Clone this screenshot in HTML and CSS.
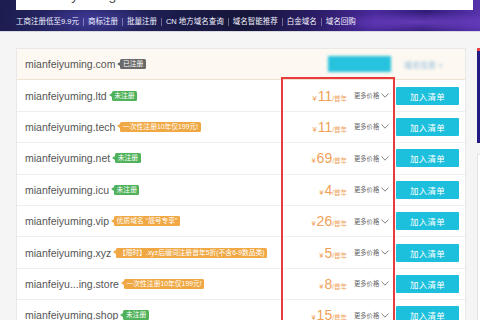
FILE: index.html
```html
<!DOCTYPE html>
<html lang="zh">
<head>
<meta charset="utf-8">
<title>域名查询</title>
<link rel="stylesheet" href="styles.css">
</head>
<body>
<header class="top">
  <div class="search">mianfeiyuming</div>
  <nav class="nav">
    <a>工商注册低至9.9元</a><i class="sep"></i>
    <a>商标注册</a><i class="sep"></i>
    <a>批量注册</a><i class="sep"></i>
    <a>CN 地方域名查询</a><i class="sep"></i>
    <a>域名智能推荐</a><i class="sep"></i>
    <a>白金域名</a><i class="sep"></i>
    <a>域名回购</a>
  </nav>
</header>
<main class="main">
  <section class="list">
    <div class="row first">
      <div class="name">mianfeiyuming.com<span class="tag grey">已注册</span></div>
      <div class="blur-btn"></div>
      <div class="blur-info">域名信息 ˅</div>
    </div>
    <div class="row">
      <div class="name">mianfeiyuming.ltd<span class="tag green">未注册</span></div>
      <div class="price"><span class="yen">¥</span><span class="num">11</span><span class="unit">/首年</span></div>
      <div class="more">更多价格<svg class="chev" viewBox="0 0 8 5"><path d="M0.5 0.5 L4 4.2 L7.5 0.5"/></svg></div>
      <button class="add">加入清单</button>
    </div>
    <div class="row">
      <div class="name">mianfeiyuming.tech<span class="tag orange">一次性注册10年仅199元!</span></div>
      <div class="price"><span class="yen">¥</span><span class="num">11</span><span class="unit">/首年</span></div>
      <div class="more">更多价格<svg class="chev" viewBox="0 0 8 5"><path d="M0.5 0.5 L4 4.2 L7.5 0.5"/></svg></div>
      <button class="add">加入清单</button>
    </div>
    <div class="row">
      <div class="name">mianfeiyuming.net<span class="tag green">未注册</span></div>
      <div class="price"><span class="yen">¥</span><span class="num">69</span><span class="unit">/首年</span></div>
      <div class="more">更多价格<svg class="chev" viewBox="0 0 8 5"><path d="M0.5 0.5 L4 4.2 L7.5 0.5"/></svg></div>
      <button class="add">加入清单</button>
    </div>
    <div class="row">
      <div class="name">mianfeiyuming.icu<span class="tag green">未注册</span></div>
      <div class="price"><span class="yen">¥</span><span class="num">4</span><span class="unit">/首年</span></div>
      <div class="more">更多价格<svg class="chev" viewBox="0 0 8 5"><path d="M0.5 0.5 L4 4.2 L7.5 0.5"/></svg></div>
      <button class="add">加入清单</button>
    </div>
    <div class="row">
      <div class="name">mianfeiyuming.vip<span class="tag orange">优质域名 “靓号专享”</span></div>
      <div class="price"><span class="yen">¥</span><span class="num">26</span><span class="unit">/首年</span></div>
      <div class="more">更多价格<svg class="chev" viewBox="0 0 8 5"><path d="M0.5 0.5 L4 4.2 L7.5 0.5"/></svg></div>
      <button class="add">加入清单</button>
    </div>
    <div class="row">
      <div class="name">mianfeiyuming.xyz<span class="tag orange">【限时】.xyz后缀词注册首年5折(不含6-9数品类)</span></div>
      <div class="price"><span class="yen">¥</span><span class="num">5</span><span class="unit">/首年</span></div>
      <div class="more">更多价格<svg class="chev" viewBox="0 0 8 5"><path d="M0.5 0.5 L4 4.2 L7.5 0.5"/></svg></div>
      <button class="add">加入清单</button>
    </div>
    <div class="row">
      <div class="name">mianfeiyu...ing.store<span class="tag orange">一次性注册10年仅199元!</span></div>
      <div class="price"><span class="yen">¥</span><span class="num">8</span><span class="unit">/首年</span></div>
      <div class="more">更多价格<svg class="chev" viewBox="0 0 8 5"><path d="M0.5 0.5 L4 4.2 L7.5 0.5"/></svg></div>
      <button class="add">加入清单</button>
    </div>
    <div class="row">
      <div class="name">mianfeiyuming.shop<span class="tag green">未注册</span></div>
      <div class="price"><span class="yen">¥</span><span class="num">15</span><span class="unit">/首年</span></div>
      <div class="more">更多价格<svg class="chev" viewBox="0 0 8 5"><path d="M0.5 0.5 L4 4.2 L7.5 0.5"/></svg></div>
      <button class="add">加入清单</button>
    </div>
    <div class="redbox"></div>
  </section>
  <aside class="side">
    <div class="promo"></div>
    <div class="card"></div>
  </aside>
</main>
</body>
</html>
```

FILE: styles.css
```css
* { box-sizing: border-box; }
html, body {
  margin: 0;
  padding: 0;
  width: 480px;
  height: 320px;
  overflow: hidden;
  background: #f5f5f5;
  font-family: "Liberation Sans", "Noto Sans CJK SC", sans-serif;
}
.top {
  height: 32px;
  overflow: hidden;
  background:
    radial-gradient(ellipse 60px 14px at 95px 20px, rgba(90,80,200,0.45), transparent),
    radial-gradient(ellipse 90px 10px at 420px 22px, rgba(140,80,230,0.55), transparent),
    linear-gradient(100deg, #1c1c4e 0%, #2b2a72 18%, #1a1a48 38%, #16163a 52%, #2c1d68 66%, #4a2a9c 78%, #311c78 88%, #5a34b0 100%);
  border-bottom: 1px solid #d8d8e0;
}
.search {
  height: 30px;
  margin: -20px 7px 0 16px;
  background: #fff;
  padding-left: 10px;
  line-height: 30px;
  font-size: 14px;
  color: #555;
}
.nav {
  display: flex;
  align-items: center;
  padding: 7px 0 0 16px;
  font-size: 7.5px;
  color: #f2f2ff;
  white-space: nowrap;
}
.nav a { display: block; line-height: 9px; }
.sep {
  display: block;
  width: 1px;
  height: 8px;
  margin: 0 4px;
  background: rgba(255,255,255,0.35);
}
.main {
  display: flex;
  align-items: flex-start;
  padding-top: 16px;
}
.list {
  position: relative;
  flex: none;
  width: 450px;
  margin-left: 16px;
  background: #fff;
  border: 1px solid #e8e8e8;
  border-bottom: none;
}
.row {
  display: flex;
  align-items: center;
  height: 31.4px;
  border-bottom: 1px solid #efefef;
  white-space: nowrap;
}
.row.first {
  background: #fdf9f2;
  border-bottom-color: #eee3d3;
}
.name {
  flex: 1;
  display: flex;
  align-items: center;
  padding-left: 8px;
  font-size: 10.5px;
  color: #555;
}
.tag {
  position: relative;
  margin-left: 5px;
  padding: 0 2.5px;
  height: 10px;
  line-height: 10px;
  font-size: 6.8px;
  color: #fff;
  border-radius: 1.5px;
}
.tag::before {
  content: "";
  position: absolute;
  left: -3px;
  top: 2.5px;
  border-top: 2.5px solid transparent;
  border-bottom: 2.5px solid transparent;
  border-right: 3px solid currentColor;
}
.tag.grey { background: #6a6a6a; }
.tag.grey::before { border-right-color: #6a6a6a; }
.tag.green { background: #4fb25a; }
.tag.green::before { border-right-color: #4fb25a; }
.tag.orange { background: #f0a844; }
.tag.orange::before { border-right-color: #f0a844; }
.blur-btn {
  width: 63px;
  height: 16px;
  margin-right: 13px;
  background: #27c2dd;
  filter: blur(1.6px);
}
.blur-info {
  width: 50px;
  margin-right: 11px;
  font-size: 8px;
  color: #8ab7d8;
  filter: blur(1.4px);
}
.price {
  display: flex;
  align-items: baseline;
  margin-right: 7px;
  color: #f0a157;
}
.yen { font-size: 7.5px; margin-right: 1px; }
.num { font-size: 14px; }
.unit { font-size: 6.5px; }
.more {
  display: flex;
  align-items: center;
  width: 36px;
  margin-right: 6px;
  font-size: 6.3px;
  color: #666;
}
.chev {
  width: 8px;
  height: 5px;
  margin-left: 1.5px;
  fill: none;
  stroke: #777;
  stroke-width: 0.9;
}
.add {
  width: 63px;
  height: 18px;
  margin-right: 6px;
  padding: 0;
  border: none;
  border-radius: 1px;
  background: #1cbfdc;
  color: #fff;
  font-family: inherit;
  font-size: 8.5px;
  letter-spacing: 0.3px;
}
.redbox {
  position: absolute;
  left: 264px;
  top: 28px;
  width: 114px;
  height: 260px;
  border: 2.6px solid #e83b3b;
}
.side {
  flex: none;
  width: 100px;
  margin-left: 11px;
}
.promo {
  height: 95px;
  border-top: 3px solid #e8434a;
  background: #221a82;
}
.card {
  height: 200px;
  margin-top: 11px;
  background: #fff;
  border: 1px solid #e3e3e3;
}
```
